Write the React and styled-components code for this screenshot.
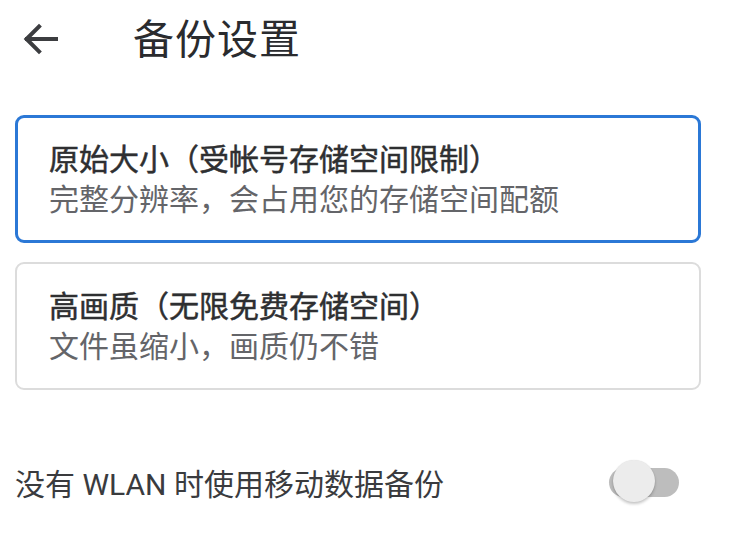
import React from "react"
import styled, { createGlobalStyle } from "styled-components"

const Global = createGlobalStyle`
  html, body {
    margin: 0;
    padding: 0;
    background: #fff;
  }
  body {
    font-family: Roboto, "Noto Sans CJK SC", sans-serif;
    color: #303134;
  }
`

const Page = styled.div`
  width: 734px;
  height: 547px;
  overflow: hidden;
  display: flex;
  flex-direction: column;
`

const Header = styled.div`
  display: flex;
  align-items: center;
  height: 78px;
  padding-left: 22px;
`

const BackButton = styled.div`
  width: 36px;
  height: 32px;
  display: flex;
  align-items: center;
  margin-right: 75px;
  svg {
    display: block;
  }
`

const Title = styled.h1`
  margin: 0 0 6px;
  font-size: 41px;
  font-weight: 400;
  color: #2a2b2e;
  letter-spacing: 1px;
`

const Options = styled.div`
  display: flex;
  flex-direction: column;
  gap: 19px;
  padding: 37px 0 0 15px;
  width: 686px;
`

const Option = styled.div`
  box-sizing: border-box;
  height: 128px;
  display: flex;
  flex-direction: column;
  justify-content: center;
  padding: 2px 31px 0;
  padding-left: ${p => 34 - p.$border}px;
  border: ${p => p.$border}px solid ${p => p.$selected ? "#2b78d6" : "#dcdcdc"};
  border-radius: 9px;
`

const OptionTitle = styled.div`
  font-size: 30px;
  line-height: 40px;
  font-weight: 400;
  -webkit-text-stroke: 0.5px #2e2f31;
  color: #2e2f31;
`

const OptionSub = styled.div`
  font-size: 30px;
  line-height: 40px;
  color: #646569;
`

const SwitchRow = styled.div`
  display: flex;
  align-items: center;
  justify-content: space-between;
  padding: 0 55px 0 15px;
  margin-top: 60px;
  height: 64px;
`

const SwitchLabel = styled.div`
  font-size: 30px;
  color: #3a3b3e;
`

const Track = styled.div`
  position: relative;
  width: 70px;
  height: 29px;
  border-radius: 15px;
  background: #bdbdbd;
`

const Thumb = styled.div`
  position: absolute;
  left: 4px;
  top: 50%;
  width: 42px;
  height: 42px;
  margin-top: -22px;
  border-radius: 50%;
  background: #ececec;
  box-shadow: 0 2px 3px rgba(0, 0, 0, 0.22), 0 0 1px rgba(0, 0, 0, 0.12);
`

const options = [
  { title: "原始大小（受帐号存储空间限制）", sub: "完整分辨率，会占用您的存储空间配额", selected: true },
  { title: "高画质（无限免费存储空间）", sub: "文件虽缩小，画质仍不错", selected: false },
]

export default function App() {
  return (
    <Page>
      <Global />
      <Header>
        <BackButton>
          <svg width="36" height="32" viewBox="0 0 36 32" fill="none" stroke="#3c3d40" strokeWidth="4" strokeLinecap="square">
            <path d="M34 16H5" />
            <path d="M17 3.5L4.5 16L17 28.5" />
          </svg>
        </BackButton>
        <Title>备份设置</Title>
      </Header>
      <Options>
        {options.map(o => (
          <Option key={o.title} $selected={o.selected} $border={o.selected ? 3 : 2}>
            <OptionTitle>{o.title}</OptionTitle>
            <OptionSub>{o.sub}</OptionSub>
          </Option>
        ))}
      </Options>
      <SwitchRow>
        <SwitchLabel>没有 WLAN 时使用移动数据备份</SwitchLabel>
        <Track>
          <Thumb />
        </Track>
      </SwitchRow>
    </Page>
  )
}
